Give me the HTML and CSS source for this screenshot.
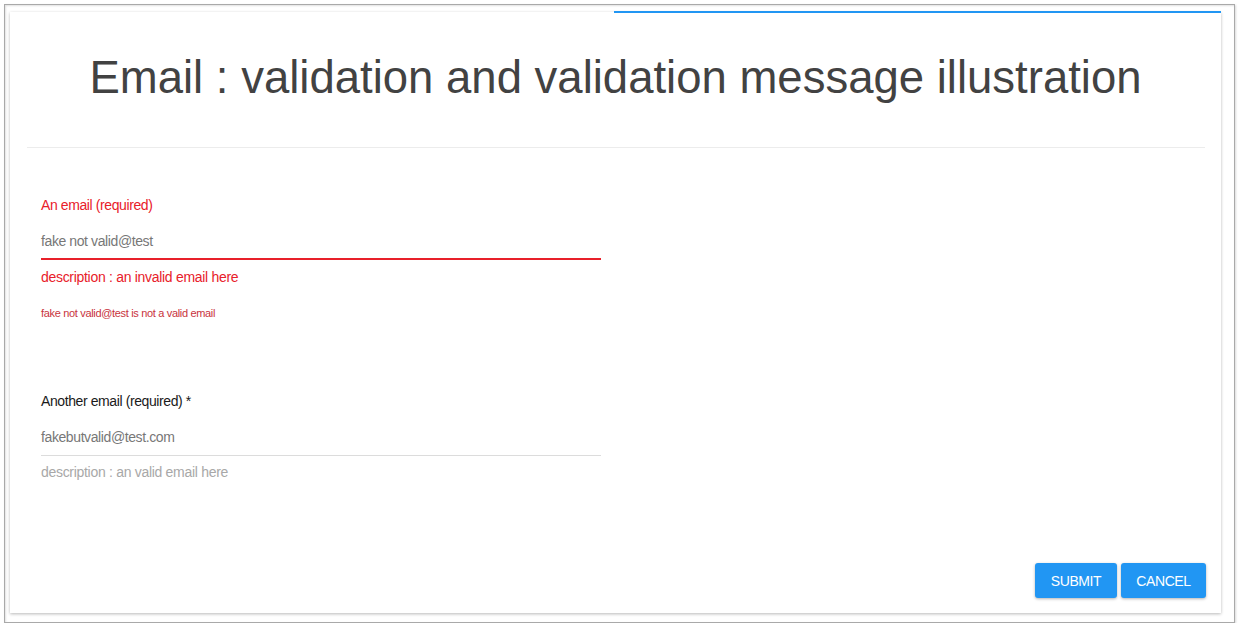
FILE: index.html
```html
<!DOCTYPE html>
<html>
<head>
<meta charset="utf-8">
<link rel="stylesheet" href="styles.css">
</head>
<body>
<div class="frame">
  <div class="card">
    <div class="progress"></div>
    <h1 class="title">Email : validation and validation message illustration</h1>
    <hr class="divider">
    <form class="form">
      <div class="field field-error">
        <div class="label">An email (required)</div>
        <div class="input">fake not valid@test</div>
        <div class="desc">description : an invalid email here</div>
        <div class="error">fake not valid@test is not a valid email</div>
      </div>
      <div class="field field-ok">
        <div class="label">Another email (required) *</div>
        <div class="input">fakebutvalid@test.com</div>
        <div class="desc">description : an valid email here</div>
      </div>
      <div class="actions">
        <button type="button" class="btn btn-submit">Submit</button>
        <button type="button" class="btn btn-cancel">Cancel</button>
      </div>
    </form>
  </div>
</div>
</body>
</html>
```
FILE: styles.css
```css
* { box-sizing: border-box; }
html, body { margin: 0; padding: 0; background: #fff; }
body { font-family: "Liberation Sans", Arial, sans-serif; }

.frame {
  margin: 4px 0 0 4px;
  width: 1231px;
  height: 619px;
  border: 1px solid #a9a9a9;
  box-shadow: inset 1px 1px 2px rgba(0,0,0,0.12), 1px 1px 2px rgba(0,0,0,0.15);
  padding: 7px 0 0 5px;
  background: #fff;
}

.card {
  position: relative;
  width: 1211px;
  height: 601px;
  background: #fff;
  box-shadow: 0 1px 3px rgba(0,0,0,0.28);
  display: flex;
  flex-direction: column;
}

.progress {
  position: absolute;
  top: -1px;
  left: 604px;
  right: 0;
  height: 2px;
  background: #2196f3;
}

.title {
  margin: 38px 0 0 0;
  font-size: 45.5px;
  line-height: 56px;
  font-weight: normal;
  color: #424242;
  text-align: center;
}

.divider {
  margin: 41px 16px 0 17px;
  border: 0;
  border-top: 1px solid #ececec;
  height: 0;
}

.form {
  display: flex;
  flex-direction: column;
  padding: 0 0 0 31px;
  flex: 1;
}

.field { width: 560px; }

.label {
  font-size: 14px;
  letter-spacing: -0.4px;
  line-height: 20px;
}
.input {
  margin-top: 16px;
  font-size: 14px;
  letter-spacing: -0.4px;
  line-height: 20px;
  color: #777;
}
.desc {
  font-size: 14px;
  letter-spacing: -0.3px;
  line-height: 20px;
}

.field-error { margin-top: 47px; }
.field-error .label { color: #e8202a; }
.field-error .input { padding-bottom: 7px; border-bottom: 2px solid #e8202a; }
.field-error .desc { margin-top: 7px; color: #e8202a; }
.field-error .error {
  margin-top: 16px;
  font-size: 11px;
  letter-spacing: -0.33px;
  line-height: 20px;
  color: #c8333d;
}

.field-ok { margin-top: 68px; }
.field-ok .label { color: #1a1a1a; }
.field-ok .input { padding-bottom: 8px; border-bottom: 1px solid #dcdcdc; }
.field-ok .desc { margin-top: 6px; color: #a8a8a8; }

.actions {
  margin-top: auto;
  display: flex;
  justify-content: flex-end;
  gap: 4px;
  padding: 0 15px 15px 0;
}

.btn {
  height: 35px;
  border: 0;
  border-radius: 3px;
  background: #2196f3;
  color: #fff;
  font-family: "Liberation Sans", Arial, sans-serif;
  font-size: 14px;
  letter-spacing: -0.4px;
  text-transform: uppercase;
  box-shadow: 0 1px 3px rgba(0,0,0,0.3);
  padding: 0;
}
.btn-submit { width: 82px; }
.btn-cancel { width: 85px; }
```
